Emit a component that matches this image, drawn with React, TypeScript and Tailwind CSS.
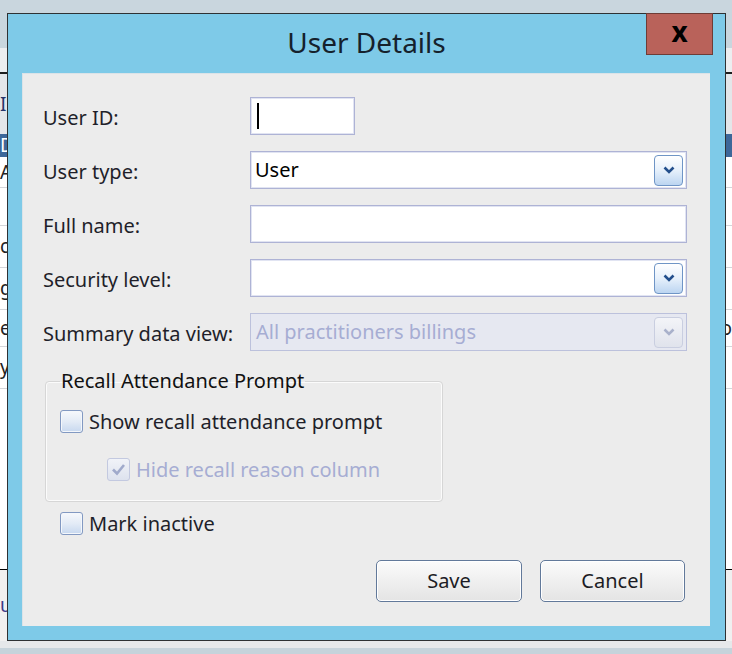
import { ReactNode } from "react";

const font = "font-['Noto_Sans','Open_Sans',sans-serif]";

function Chevron({ disabled = false }: { disabled?: boolean }) {
  return (
    <svg width="12" height="8" viewBox="0 0 12 8">
      <path
        d="M1.5 1.5 L6 6 L10.5 1.5"
        fill="none"
        stroke={disabled ? "#a9b1cb" : "#234f8c"}
        strokeWidth="2.6"
        strokeLinejoin="miter"
      />
    </svg>
  );
}

function DropButton({ disabled = false }: { disabled?: boolean }) {
  return (
    <div
      className={
        disabled
          ? "flex h-[31px] w-[29px] items-center justify-center rounded-[4px] border border-[#c9cee0] bg-gradient-to-b from-[#f3f4f8] to-[#e0e3ec]"
          : "flex h-[31px] w-[29px] items-center justify-center rounded-[4px] border border-[#6f95c6] bg-gradient-to-b from-[#ffffff] via-[#e6f0fb] to-[#bcd5f1]"
      }
    >
      <Chevron disabled={disabled} />
    </div>
  );
}

function Field({ label, children }: { label: string; children: ReactNode }) {
  return (
    <div className="flex h-[38px] items-center">
      <span className="mt-[3px] w-[207px] text-[20px] text-[#1f1f2a]">{label}</span>
      {children}
    </div>
  );
}

function Select({ value, disabled = false }: { value?: string; disabled?: boolean }) {
  return (
    <div
      className={
        disabled
          ? "flex h-[38px] flex-1 items-center justify-between border border-[#bcc1dc] bg-[#e6e8f1] pl-[5px] pr-[3px]"
          : "flex h-[38px] flex-1 items-center justify-between border border-[#aeb3d5] bg-white pl-[4px] pr-[3px] shadow-[inset_0_0_0_1px_#e1e4f2]"
      }
    >
      <span className={disabled ? "text-[20px] text-[#a6add3]" : "text-[20px] text-black"}>{value}</span>
      <DropButton disabled={disabled} />
    </div>
  );
}

function CheckBox({ checked = false, disabled = false }: { checked?: boolean; disabled?: boolean }) {
  return (
    <div
      className={
        disabled
          ? "flex h-[23px] w-[23px] items-center justify-center rounded-[3px] border border-[#c3c9e0] bg-gradient-to-b from-[#f1f3f8] to-[#dde2ee]"
          : "h-[23px] w-[23px] rounded-[3px] border border-[#8299c2] bg-gradient-to-b from-[#f6f8fc] via-[#e3ebf6] to-[#c7d8ef] shadow-[inset_0_0_0_1px_#f4f7fb]"
      }
    >
      {checked && (
        <svg width="15" height="13" viewBox="0 0 15 13">
          <path d="M2 6.5 L6 10.5 L13 2" fill="none" stroke="#a0aacb" strokeWidth="2.6" />
        </svg>
      )}
    </div>
  );
}

function WinButton({ label, width }: { label: string; width: string }) {
  return (
    <button
      className={`${width} h-[42px] rounded-[5px] border border-[#62799a] bg-gradient-to-b from-[#fbfbfb] to-[#e4e4e4] text-[20px] text-[#1c1c24] shadow-[inset_0_0_0_1px_#ffffff]`}
    >
      {label}
    </button>
  );
}

const backRows = [
  { h: "h-[31px]", left: "A", right: "" },
  { h: "h-[38px]", left: "", right: "" },
  { h: "h-[42px]", left: "c", right: "" },
  { h: "h-[42px]", left: "gi", right: "" },
  { h: "h-[37px]", left: "e", right: "o" },
  { h: "h-[42px]", left: "y", right: "" },
];

export default function App() {
  return (
    <div className={`relative h-[654px] w-[732px] overflow-hidden bg-white ${font}`}>
      {/* list window behind the dialog */}
      <div className="flex h-full flex-col text-[19px]">
        <div className="h-[48px] bg-[#c9d6de]" />
        <div className="h-[24px] bg-[#eceef0]" />
        <div className="h-[2px] bg-[#1d1d1d]" />
        <div className="flex h-[60px] items-center bg-[#e4e6e9] text-[#26346a]">
          <span>I</span>
        </div>
        <div className="flex h-[23px] items-center bg-[#3d6799] text-white">
          <span>D</span>
        </div>
        {backRows.map((r, i) => (
          <div key={i} className={`flex ${r.h} items-center justify-between border-b border-[#d4d6da] text-[#222]`}>
            <span>{r.left}</span>
            <span>{r.right}</span>
          </div>
        ))}
        <div className="flex-1" />
        <div className="h-px bg-black" />
        <div className="flex h-[71px] items-center bg-[#f0f0f0] text-[#3b3b8a]">
          <span>u</span>
        </div>
        <div className="h-[7px] bg-[#e6e8ea]" />
        <div className="h-[6px] bg-[#c6d3db]" />
      </div>

      {/* User Details dialog */}
      <div className="absolute left-[7px] top-[13px] flex h-[628px] w-[719px] flex-col border border-[#2e3133] bg-[#7ecae8]">
        <div className="relative flex h-[59px] items-center justify-center">
          <span className="-mt-[3px] text-[28px] text-[#15212c]">User Details</span>
          <div className="absolute right-[12px] -top-px flex h-[42px] w-[67px] items-center justify-center border border-[#6e3c36] bg-[#b9625a]">
            <span className="-mt-[6px] text-[28px] font-bold text-black">x</span>
          </div>
        </div>

        <div className="mb-[14px] ml-[14px] mr-[15px] flex flex-1 flex-col border-t border-l border-[#dbe3e8] bg-[#ececec] pl-[20px] pr-[23px] pt-[23px]">
          <div className="flex flex-col gap-[16px]">
            <Field label="User ID:">
              <div className="flex h-[38px] w-[105px] items-center border border-[#aeb3d5] bg-white pl-[6px] shadow-[inset_0_0_0_1px_#e1e4f2]">
                <div className="h-[26px] w-[2px] bg-black" />
              </div>
            </Field>
            <Field label="User type:">
              <Select value="User" />
            </Field>
            <Field label="Full name:">
              <div className="h-[38px] flex-1 border border-[#aeb3d5] bg-white shadow-[inset_0_0_0_1px_#e1e4f2]" />
            </Field>
            <Field label="Security level:">
              <Select />
            </Field>
            <Field label="Summary data view:">
              <Select value="All practitioners billings" disabled />
            </Field>
          </div>

          <fieldset className="ml-[2px] mt-[17px] w-[398px] rounded-[4px] border border-[#d6d6d6] pb-[20px] pl-[14px] shadow-[inset_0_0_0_1px_#fbfbfb]">
            <legend className="-mt-[3px] px-[1px] text-[20px] leading-[26px] text-[#111]">Recall Attendance Prompt</legend>
            <div className="mt-[16px] flex h-[23px] items-center gap-[6px]">
              <CheckBox />
              <span className="text-[20px] text-[#1f1f2a]">Show recall attendance prompt</span>
            </div>
            <div className="ml-[47px] mt-[25px] flex h-[23px] items-center gap-[6px]">
              <CheckBox checked disabled />
              <span className="text-[20px] text-[#a6add3]">Hide recall reason column</span>
            </div>
          </fieldset>

          <div className="ml-[17px] mt-[10px] flex h-[23px] items-center gap-[6px]">
            <CheckBox />
            <span className="text-[20px] text-[#1f1f2a]">Mark inactive</span>
          </div>

          <div className="mr-[2px] mt-[25px] flex justify-end gap-[18px]">
            <WinButton label="Save" width="w-[146px]" />
            <WinButton label="Cancel" width="w-[145px]" />
          </div>
        </div>
      </div>
    </div>
  );
}
